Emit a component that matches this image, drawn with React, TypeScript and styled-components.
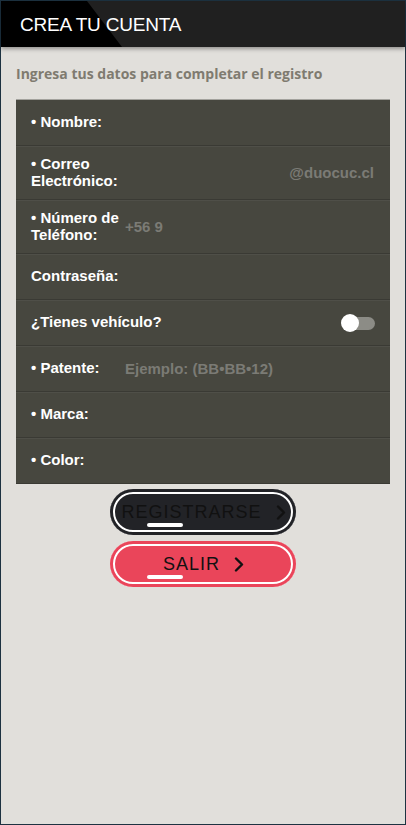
import React, { useState } from 'react'
import styled, { createGlobalStyle } from 'styled-components'

/* --------------------------------
 * Global
 * -------------------------------- */

const GlobalStyle = createGlobalStyle`
  html, body {
    margin: 0;
    padding: 0;
    background: #e1dfdb;
  }
  * {
    box-sizing: border-box;
  }
`

/* --------------------------------
 * Styled Components
 * -------------------------------- */

const Frame = styled.div`
  display: flex;
  flex-direction: column;
  min-height: 825px;
  border: 1px solid #1d3241;
  background: #e1dfdb;
  font-family: 'Liberation Sans', Arial, sans-serif;
`

const Header = styled.header`
  position: relative;
  display: flex;
  align-items: center;
  height: 46px;
  padding: 0 19px;
  background: #202020;
  box-shadow: 0 2px 4px rgba(0, 0, 0, 0.35);
  overflow: hidden;

  &::before {
    content: '';
    position: absolute;
    inset: 0;
    background: #000;
    clip-path: polygon(0 0, 86px 0, 121px 100%, 0 100%);
  }
`

const Title = styled.h1`
  position: relative;
  margin: 0;
  padding-top: 2px;
  font-size: 19px;
  font-weight: 400;
  color: #fff;
  letter-spacing: -0.2px;
`

const Content = styled.main`
  display: flex;
  flex-direction: column;
  padding: 0 15px;
`

const Subtitle = styled.p`
  margin: 17px 0 15px 0;
  font-family: 'Open Sans', sans-serif;
  font-size: 14px;
  font-weight: 700;
  line-height: 20px;
  color: #7f7b70;
`

const Card = styled.section`
  display: flex;
  flex-direction: column;
  background: #47473f;
  border-top: 1px solid #a3a29d;
`

const Row = styled.div`
  display: flex;
  align-items: center;
  min-height: 46px;
  padding: 10px 15px;
  border-bottom: 1px solid #3a3a34;
  box-shadow: inset 0 1px 0 #4f4f48;

  &:first-child {
    box-shadow: none;
  }
`

const Label = styled.label<{ $wide?: boolean }>`
  flex: ${({ $wide }) => ($wide ? '1' : '0 0 90px')};
  font-size: 15px;
  font-weight: 700;
  line-height: 16.5px;
  color: #fff;
`

const Field = styled.input<{ $align?: 'left' | 'right' }>`
  flex: 1;
  min-width: 0;
  height: 25px;
  margin-left: 4px;
  padding: 0 1px 0 0;
  border: none;
  outline: none;
  background: transparent;
  font-family: 'Liberation Sans', Arial, sans-serif;
  font-size: 15px;
  font-weight: 700;
  color: #fff;
  text-align: ${({ $align }) => $align ?? 'left'};

  &::placeholder {
    color: #7b7b75;
  }
`

const Switch = styled.button`
  position: relative;
  flex: 0 0 34px;
  height: 18px;
  padding: 0;
  border: none;
  background: transparent;
  cursor: pointer;
`

const SwitchTrack = styled.span<{ $on: boolean }>`
  position: absolute;
  right: 0;
  top: 3px;
  width: 26px;
  height: 13px;
  border-radius: 7px;
  background: ${({ $on }) => ($on ? '#e94458' : '#8c8c86')};
`

const SwitchKnob = styled.span<{ $on: boolean }>`
  position: absolute;
  top: 0;
  left: ${({ $on }) => ($on ? '16px' : '0')};
  width: 18px;
  height: 18px;
  border-radius: 50%;
  background: #fff;
`

const Actions = styled.div`
  display: flex;
  flex-direction: column;
  align-items: center;
  gap: 6px;
  margin-top: 5px;
`

const PillButton = styled.button<{ $bg: string }>`
  position: relative;
  display: flex;
  align-items: center;
  justify-content: center;
  gap: 14px;
  width: 186px;
  height: 46px;
  padding: 0 0 0 1px;
  border: none;
  border-radius: 23px;
  background: ${({ $bg }) => $bg};
  box-shadow:
    inset 0 0 0 3px ${({ $bg }) => $bg},
    inset 0 0 0 5px #fff;
  font-family: 'Liberation Sans', Arial, sans-serif;
  font-size: 18px;
  letter-spacing: 1px;
  color: #111;
  cursor: pointer;
`

const ButtonBar = styled.span`
  position: absolute;
  left: 37px;
  bottom: 8px;
  width: 36px;
  height: 4px;
  border-radius: 2px;
  background: #fff;
`

/* --------------------------------
 * Component
 * -------------------------------- */

const Chevron: React.FC = () => (
  <svg width="10" height="15" viewBox="0 0 10 15" fill="none">
    <polyline
      points="2,1.5 8,7.5 2,13.5"
      stroke="#111"
      strokeWidth="2.4"
      strokeLinecap="round"
      strokeLinejoin="round"
    />
  </svg>
)

export default function App() {
  const [hasVehicle, setHasVehicle] = useState(false)

  return (
    <>
      <GlobalStyle />
      <Frame>
        <Header>
          <Title>CREA TU CUENTA</Title>
        </Header>

        <Content>
          <Subtitle>Ingresa tus datos para completar el registro</Subtitle>

          <Card>
            <Row>
              <Label>• Nombre:</Label>
              <Field type="text" />
            </Row>
            <Row>
              <Label>• Correo Electrónico:</Label>
              <Field type="text" placeholder="@duocuc.cl" $align="right" />
            </Row>
            <Row>
              <Label>• Número de Teléfono:</Label>
              <Field type="tel" placeholder="+56 9" />
            </Row>
            <Row>
              <Label>Contraseña:</Label>
              <Field type="password" />
            </Row>
            <Row>
              <Label $wide>¿Tienes vehículo?</Label>
              <Switch onClick={() => setHasVehicle((v) => !v)}>
                <SwitchTrack $on={hasVehicle} />
                <SwitchKnob $on={hasVehicle} />
              </Switch>
            </Row>
            <Row>
              <Label>• Patente:</Label>
              <Field type="text" placeholder="Ejemplo: (BB•BB•12)" />
            </Row>
            <Row>
              <Label>• Marca:</Label>
              <Field type="text" />
            </Row>
            <Row>
              <Label>• Color:</Label>
              <Field type="text" />
            </Row>
          </Card>

          <Actions>
            <PillButton $bg="#222327">
              REGISTRARSE
              <Chevron />
              <ButtonBar />
            </PillButton>
            <PillButton $bg="#ea455a">
              SALIR
              <Chevron />
              <ButtonBar />
            </PillButton>
          </Actions>
        </Content>
      </Frame>
    </>
  )
}
